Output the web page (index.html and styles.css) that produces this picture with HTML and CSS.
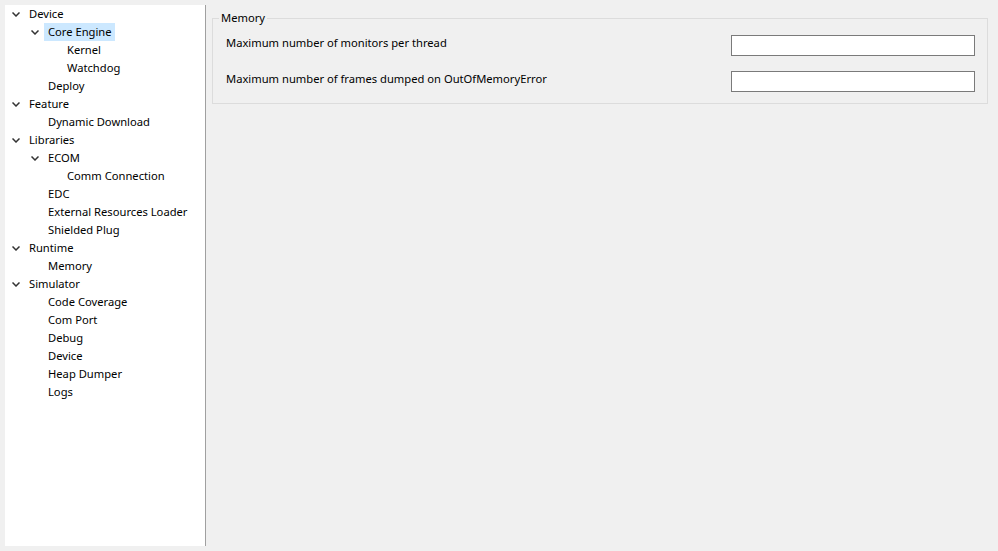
FILE: index.html
```html
<!DOCTYPE html>
<html>
<head>
<meta charset="utf-8">
<link rel="stylesheet" href="styles.css">
</head>
<body>
<div class="app">
  <nav class="tree">
    <div class="row lvl0"><span class="tog"><svg class="chev" width="8" height="5" viewBox="0 0 8 5"><path d="M0.5 0.5 L4 4 L7.5 0.5" /></svg></span><span class="lbl">Device</span></div>
    <div class="row lvl1"><span class="tog"><svg class="chev" width="8" height="5" viewBox="0 0 8 5"><path d="M0.5 0.5 L4 4 L7.5 0.5" /></svg></span><span class="lbl sel">Core Engine</span></div>
    <div class="row lvl2"><span class="tog"></span><span class="lbl">Kernel</span></div>
    <div class="row lvl2"><span class="tog"></span><span class="lbl">Watchdog</span></div>
    <div class="row lvl1"><span class="tog"></span><span class="lbl">Deploy</span></div>
    <div class="row lvl0"><span class="tog"><svg class="chev" width="8" height="5" viewBox="0 0 8 5"><path d="M0.5 0.5 L4 4 L7.5 0.5" /></svg></span><span class="lbl">Feature</span></div>
    <div class="row lvl1"><span class="tog"></span><span class="lbl">Dynamic Download</span></div>
    <div class="row lvl0"><span class="tog"><svg class="chev" width="8" height="5" viewBox="0 0 8 5"><path d="M0.5 0.5 L4 4 L7.5 0.5" /></svg></span><span class="lbl">Libraries</span></div>
    <div class="row lvl1"><span class="tog"><svg class="chev" width="8" height="5" viewBox="0 0 8 5"><path d="M0.5 0.5 L4 4 L7.5 0.5" /></svg></span><span class="lbl">ECOM</span></div>
    <div class="row lvl2"><span class="tog"></span><span class="lbl">Comm Connection</span></div>
    <div class="row lvl1"><span class="tog"></span><span class="lbl">EDC</span></div>
    <div class="row lvl1"><span class="tog"></span><span class="lbl">External Resources Loader</span></div>
    <div class="row lvl1"><span class="tog"></span><span class="lbl">Shielded Plug</span></div>
    <div class="row lvl0"><span class="tog"><svg class="chev" width="8" height="5" viewBox="0 0 8 5"><path d="M0.5 0.5 L4 4 L7.5 0.5" /></svg></span><span class="lbl">Runtime</span></div>
    <div class="row lvl1"><span class="tog"></span><span class="lbl">Memory</span></div>
    <div class="row lvl0"><span class="tog"><svg class="chev" width="8" height="5" viewBox="0 0 8 5"><path d="M0.5 0.5 L4 4 L7.5 0.5" /></svg></span><span class="lbl">Simulator</span></div>
    <div class="row lvl1"><span class="tog"></span><span class="lbl">Code Coverage</span></div>
    <div class="row lvl1"><span class="tog"></span><span class="lbl">Com Port</span></div>
    <div class="row lvl1"><span class="tog"></span><span class="lbl">Debug</span></div>
    <div class="row lvl1"><span class="tog"></span><span class="lbl">Device</span></div>
    <div class="row lvl1"><span class="tog"></span><span class="lbl">Heap Dumper</span></div>
    <div class="row lvl1"><span class="tog"></span><span class="lbl">Logs</span></div>
  </nav>
  <main class="pane">
    <fieldset class="group">
      <legend class="legend">Memory</legend>
      <div class="form">
        <label class="flabel">Maximum number of monitors per thread</label>
        <input class="field" type="text">
        <label class="flabel">Maximum number of frames dumped on OutOfMemoryError</label>
        <input class="field" type="text">
      </div>
    </fieldset>
  </main>
</div>
</body>
</html>
```

FILE: styles.css
```css
html, body {
  margin: 0;
  padding: 0;
  height: 100%;
}
body {
  background: #f0f0f0;
  font-family: "Noto Sans", "Open Sans", sans-serif;
  font-size: 11.2px;
  color: #000;
}
.app {
  display: flex;
  height: 551px;
  box-sizing: border-box;
  padding: 5px 0 5px 5px;
}
.tree {
  width: 200px;
  background: #fff;
  border-right: 1px solid #a0a0a0;
  flex: none;
}
.row {
  height: 18px;
  display: flex;
  align-items: center;
}
.lvl1 { padding-left: 19px; }
.lvl2 { padding-left: 38px; }
.tog {
  width: 20px;
  height: 18px;
  flex: none;
  display: flex;
  align-items: center;
}
.chev {
  margin-left: 7px;
  margin-top: 1px;
}
.chev path {
  fill: none;
  stroke: #333;
  stroke-width: 1.5;
}
.lbl {
  height: 18px;
  line-height: 18px;
  padding: 0 3px 0 4px;
  white-space: nowrap;
}
.sel {
  background: #cce8ff;
}
.pane {
  flex: 1;
  padding: 5px 10px 0 6px;
}
.group {
  margin: 0;
  border: 1px solid #dcdcdc;
  padding: 0;
}
.legend {
  padding: 0 2px;
  margin-left: 6px;
  line-height: 16px;
}
.form {
  display: grid;
  grid-template-columns: 1fr 244px;
  grid-auto-rows: 21px;
  row-gap: 15px;
  padding: 9px 12px 11px 13px;
}
.flabel {
  line-height: 16px;
  white-space: nowrap;
}
.field {
  box-sizing: border-box;
  height: 21px;
  width: 244px;
  margin: 0;
  border: 1px solid #7a7a7a;
  background: #fff;
  padding: 0 3px;
  font: inherit;
}
```
